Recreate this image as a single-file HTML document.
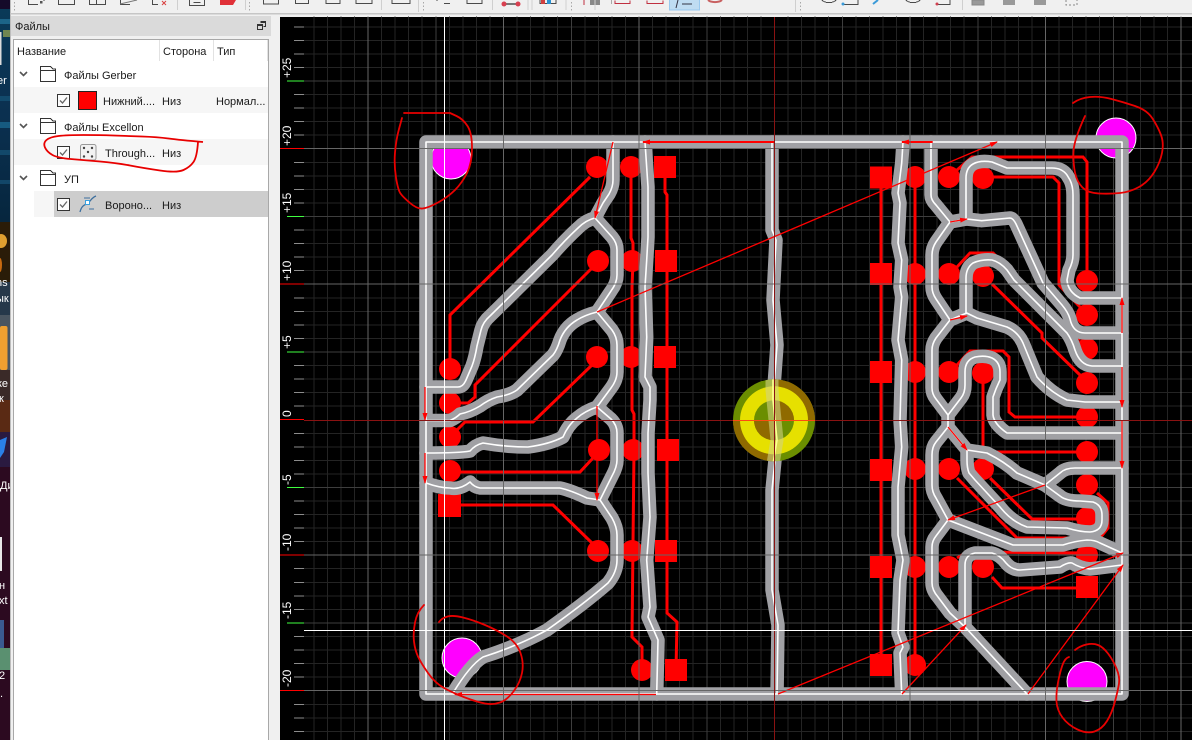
<!DOCTYPE html>
<html lang="ru"><head><meta charset="utf-8"><title>Файлы</title>
<style>
html,body{margin:0;padding:0;background:#f0f0f0;width:1192px;height:740px;overflow:hidden}
svg{display:block}
text{font-family:"Liberation Sans","DejaVu Sans",sans-serif}
.p{font-size:11px;fill:#1a1a1a}
.r{font-size:12px;fill:#fff}
.d{font-size:11px;fill:#fff}
</style></head><body>
<svg width="1192" height="740" viewBox="0 0 1192 740" xmlns="http://www.w3.org/2000/svg">
<defs>
<marker id="a" markerWidth="9" markerHeight="6" refX="7" refY="3" orient="auto" markerUnits="userSpaceOnUse"><path d="M0 0.5L8 3L0 5.5Z" fill="#f00"/></marker>
<clipPath id="cc"><circle cx="774" cy="420.3" r="41"/></clipPath>
<clipPath id="st"><rect x="0" y="0" width="10" height="740"/></clipPath>
<linearGradient id="g1" x1="0" y1="0" x2="0" y2="1"><stop offset="0" stop-color="#0a3a58"/><stop offset=".5" stop-color="#0b3050"/><stop offset="1" stop-color="#06263e"/></linearGradient>
</defs>

<!-- desktop strip -->
<g clip-path="url(#st)">
<rect width="10" height="740" fill="#2c0a20"/>
<rect width="10" height="9" fill="#150a2a"/>
<rect y="9" width="10" height="213" fill="url(#g1)"/>
<rect y="19" width="10" height="5" fill="#1c6488"/>
<rect x="3" y="30" width="7" height="7" fill="#8a9a50" opacity=".8"/>
<rect y="32" width="1.5" height="33" fill="#dcdcdc"/>
<rect y="96" width="10" height="5" fill="#124a6c"/>
<rect y="122" width="10" height="6" fill="#165a80"/>
<rect y="150" width="10" height="5" fill="#12486a"/>
<rect y="180" width="10" height="4" fill="#124668"/>
<rect y="222" width="10" height="60" fill="#2a1c08"/>
<ellipse cx="1" cy="241" rx="6" ry="7" fill="#e0a030"/>
<ellipse cx="0" cy="265" rx="2" ry="7" fill="#c86a10"/>
<rect y="282" width="10" height="40" fill="#26384a"/>
<rect y="315" width="10" height="55" fill="#4a5560"/>
<rect x="0" y="326" width="7.5" height="44" rx="2" fill="#f0a030"/>
<rect y="370" width="10" height="30" fill="#3a2a28"/>
<rect y="400" width="10" height="32" fill="#5a2a14"/>
<rect y="432" width="10" height="35" fill="#2a1a40"/>
<path d="M0 440L7 437L4 452L0 458Z" fill="#2a80e8"/>
<rect x="0" y="537" width="2" height="34" fill="#e8e8e8"/>
<rect x="0" y="620" width="4" height="32" fill="#3a5a90"/>
<rect x="0" y="648" width="10" height="22" fill="#5a9070"/>
<text class="d" x="-3" y="84">er</text>
<text class="d" x="-4" y="286">ns</text>
<text class="d" x="-4" y="302">ык</text>
<text class="d" x="-3" y="387">ке</text>
<text class="d" x="-1" y="402">к</text>
<text class="d" x="0" y="489">Ди</text>
<text class="d" x="-1" y="589">н</text>
<text class="d" x="-1" y="604">xt</text>
<text class="d" x="-1" y="679">2</text>
<text class="d" x="0" y="697">.</text>
</g>
<rect x="10" y="0" width="1" height="740" fill="#bdbdbd"/>

<!-- toolbar partial icons -->
<g fill="none" stroke="#4a4a4a" stroke-width="1" shape-rendering="crispEdges">
<path d="M28.5 0V4.5H38M44 0V1M58.5 0V4.5H74.5V0M89.5 0V4.5H105.5V0M96.5 0V4.5M120.5 0V4.5H130M152.5 0V4.5H158"/>
<path d="M189.5 0V5.5H204.5V0M193.5 2.5H200.5"/>
<path d="M263.5 0V4H278.5V0M295.5 0V3.5H308.5V0M326 0V3.5H340V0M356 0V3.5H372V0M392 0V3.5H410V0"/>
<path d="M437 0V1M444 3.5H450M467 0V3.5H482V0M540 0V3.5H556V0"/>
<path d="M822 0A8 5 0 0 0 836 0M843 4.5H858V0M906 0A8 5 0 0 0 920 0M938 4.5H950V0"/>
</g>
<path d="M120 4L137 0" stroke="#777" fill="none"/>
<path d="M162 1L166 5M166 1L162 5" stroke="#d84040" fill="none"/>
<path d="M220 5H233L236 0H220Z" fill="#e03038"/>
<rect x="40" y="1" width="2.5" height="2.5" fill="#555"/>
<rect x="590" y="0" width="10" height="5" fill="#888"/>
<rect x="611" y="0" width="1" height="4" fill="#aaa"/>
<path d="M615 .5V3.5H630V.5M647 .5V3.5H663V.5" stroke="#c03040" fill="none"/>
<rect x="669.5" y="-1" width="30" height="11" fill="#bfdcf2" stroke="#99c9ef"/>
<path d="M676 8L678 0M682 4H692" stroke="#334" fill="none"/>
<path d="M708 0A8 4 0 0 0 722 0" stroke="#c86060" stroke-width="2" fill="none"/>
<path d="M584 0V5" stroke="#c03040"/>
<rect x="502" y="3" width="16" height="2" fill="#777"/><circle cx="504" cy="4" r="2.5" fill="#d84050"/><circle cx="518" cy="4" r="2.5" fill="#d84050"/>
<rect x="541" y="0" width="4" height="4" fill="#d04040"/><rect x="547" y="0" width="4" height="4" fill="#2a90d0"/>
<circle cx="843" cy="4" r="1.5" fill="#3a9ad8"/><path d="M873 4L878 0" stroke="#3a9ad8" stroke-width="2"/>
<circle cx="937" cy="4" r="1.5" fill="#d04050"/>
<rect x="972" y="0" width="12" height="5" fill="#999" stroke="#888"/><rect x="1003" y="0" width="12" height="5" fill="#999"/><rect x="1034" y="0" width="12" height="5" fill="#999"/>
<path d="M1066 0V5H1077V0" stroke="#888" stroke-dasharray="2 2" fill="none"/>
<path d="M177.5 0V10M245.5 0V10M381.5 0V10M418.5 0V12M492.5 0V10M528 0V10M566 0V10M595 0V10M795.5 0V12M962.5 0V10M532 0V10" stroke="#cfcfcf" fill="none"/>
<path d="M14.5 2V12M249.5 2V12M423.5 2V12M571.5 2V12M800.5 2V12" stroke="#a8a8a8" stroke-dasharray="1.5 2" fill="none"/>
<rect x="10" y="13" width="1182" height="1.5" fill="#c6c6c6"/>

<!-- files panel -->
<rect x="11" y="16" width="260" height="20" fill="#dadada"/>
<text class="p" x="15" y="30">Файлы</text>
<path d="M260.5 21.5H265.500V26.500H263.500M257.500 24.500H262.500V29.500H257.500ZM257.500 25.500H262.500M260.500 22.500H265.500" fill="none" stroke="#333" stroke-width="1" shape-rendering="crispEdges"/>
<rect x="13.5" y="39.5" width="255" height="702" fill="#fff" stroke="#a8a8a8"/>
<path d="M159.5 40V61M213.5 40V61M267.5 40V61" stroke="#e2e2e2"/>
<text class="p" x="17" y="55">Название</text>
<text class="p" x="163" y="55">Сторона</text>
<text class="p" x="217" y="55">Тип</text>
<rect x="14" y="87" width="254" height="26" fill="#f6f6f6"/>
<rect x="14" y="139" width="254" height="26" fill="#f6f6f6"/>
<rect x="34" y="191" width="20" height="26" fill="#f6f6f6"/>
<rect x="54" y="191" width="214" height="26" fill="#cdcdcd"/>

<g fill="none" stroke="#555" stroke-width="1.6"><path d="M20 72L23.500 75.500L27 72M20 124L23.500 127.500L27 124M20 176L23.500 179.500L27 176"/></g>
<g fill="#fff" stroke="#333" stroke-width="1" shape-rendering="crispEdges">
<path d="M40.5 66.5H50.5L53 69H55.5V81.5H40.5ZM40.5 70.5H55.5"/>
<path d="M40.5 118.5H50.5L53 121H55.5V133.5H40.5ZM40.5 122.5H55.5"/>
<path d="M40.5 170.5H50.5L53 173H55.5V185.5H40.5ZM40.5 174.5H55.5"/>
<rect x="57.5" y="94.5" width="12" height="12" fill="#fcfcfc"/>
<rect x="57.5" y="146.5" width="12" height="12" fill="#fcfcfc"/>
<rect x="57.5" y="198.5" width="12" height="12" fill="#fcfcfc"/>
</g>
<g fill="none" stroke="#666" stroke-width="1.3"><path d="M60 100.5L62.5 103L67 97.5M60 152.5L62.5 155L67 149.5M60 204.5L62.5 207L67 201.5"/></g>
<rect x="78.5" y="91.5" width="18" height="18" fill="#f00" stroke="#222"/>
<rect x="80.5" y="144.5" width="15.5" height="15.5" rx="2" fill="#f2f2f2" stroke="#999"/>
<g fill="#444"><circle cx="84" cy="148" r="1.2"/><circle cx="92" cy="148" r="1.2"/><circle cx="88" cy="152" r="1.2"/><circle cx="84" cy="156.5" r="1.2"/><circle cx="92" cy="156.5" r="1.2"/></g>
<path d="M80 212C82 204 86 205 88 203C91 201 91 198 96 196" fill="none" stroke="#3d6f9e" stroke-width="1.3"/>
<path d="M84 198H90M89 209H94" stroke="#3d6f9e" fill="none"/>
<rect x="85.5" y="200.5" width="4" height="4" fill="#fff" stroke="#38a0e0"/>

<text class="p" x="64" y="79">Файлы Gerber</text>
<text class="p" x="103" y="105">Нижний....</text>
<text class="p" x="162" y="105">Низ</text>
<text class="p" x="216" y="105">Нормал...</text>
<text class="p" x="64" y="131">Файлы Excellon</text>
<text class="p" x="105" y="157">Through...</text>
<text class="p" x="162" y="157">Низ</text>
<text class="p" x="64" y="183">УП</text>
<text class="p" x="105" y="209">Вороно...</text>
<text class="p" x="162" y="209">Низ</text>
<path d="M203 142Q180 140 168.5 138.5T142 136.5T113.5 135.5T83.5 135T58.5 136T46.5 140T45 147.5T52.5 155T70.5 159T100 161.5T130 165.5T160 170.5T183.5 170T193.5 162T198 142" fill="none" stroke="#e80000" stroke-width="1.8" stroke-linejoin="round"/>

<!-- canvas -->
<rect x="280" y="17" width="912" height="723" fill="#000"/>
<g transform="translate(0 -.6)" shape-rendering="crispEdges" fill="none">
<path stroke="#242424" d="M313.8 17V741M327.35 17V741M340.9 17V741M354.45 17V741M381.55 17V741M395.1 17V741M408.65 17V741M422.2 17V741M449.3 17V741M462.85 17V741M476.4 17V741M489.95 17V741M517.05 17V741M530.6 17V741M544.15 17V741M557.7 17V741M584.8 17V741M598.35 17V741M611.9 17V741M625.45 17V741M652.55 17V741M666.1 17V741M679.65 17V741M693.2 17V741M720.3 17V741M733.85 17V741M747.4 17V741M761 17V741M788.05 17V741M801.6 17V741M815.15 17V741M828.7 17V741M855.8 17V741M869.35 17V741M882.9 17V741M896.45 17V741M923.55 17V741M937.1 17V741M950.65 17V741M964.2 17V741M991.3 17V741M1004.85 17V741M1018.4 17V741M1031.95 17V741M1059.05 17V741M1072.6 17V741M1086.15 17V741M1099.7 17V741M1126.8 17V741M1140.35 17V741M1153.9 17V741M1167.45 17V741
M304 27.35H1192M304 40.9H1192M304 54.45H1192M304 68H1192M304 95.1H1192M304 108.65H1192M304 122.2H1192M304 135.75H1192M304 162.85H1192M304 176.4H1192M304 189.95H1192M304 203.5H1192M304 230.6H1192M304 244.15H1192M304 257.7H1192M304 271.25H1192M304 298.35H1192M304 311.9H1192M304 325.45H1192M304 339H1192M304 366.1H1192M304 379.65H1192M304 393.2H1192M304 406.75H1192M304 433.85H1192M304 447.4H1192M304 460.95H1192M304 474.5H1192M304 501.6H1192M304 515.15H1192M304 528.7H1192M304 542.25H1192M304 569.35H1192M304 582.9H1192M304 596.45H1192M304 610H1192M304 637.1H1192M304 650.65H1192M304 664.2H1192M304 677.75H1192M304 704.85H1192M304 718.4H1192M304 731.95H1192"/>
<path stroke="#3e3e3e" d="M435.75 17V741M571.25 17V741M706.75 17V741M842.25 17V741M977.75 17V741M1113.25 17V741M304 81.55H1192M304 217.05H1192M304 352.55H1192M304 488.05H1192M304 623.55H1192"/>
<path stroke="#8c8c8c" d="M294 27.35h10M294 40.9h10M294 54.45h10M294 68h10M294 95.1h10M294 108.65h10M294 122.2h10M294 135.75h10M294 162.85h10M294 176.4h10M294 189.95h10M294 203.5h10M294 230.6h10M294 244.15h10M294 257.7h10M294 271.25h10M294 298.35h10M294 311.9h10M294 325.45h10M294 339h10M294 366.1h10M294 379.65h10M294 393.2h10M294 406.75h10M294 433.85h10M294 447.4h10M294 460.95h10M294 474.5h10M294 501.6h10M294 515.15h10M294 528.7h10M294 542.25h10M294 569.35h10M294 582.9h10M294 596.45h10M294 610h10M294 637.1h10M294 650.65h10M294 664.2h10M294 677.75h10M294 704.85h10M294 718.4h10M294 731.95h10"/>
<path stroke="#40ff40" d="M287 81.55h17M287 217.05h17M287 352.55h17M287 488.05h17M287 623.55h17"/>
<path stroke="#ff0000" d="M280 149.3h24M280 284.8h24M280 420.3h24M280 555.8h24M280 691.3h24"/>
</g>
<g>
<text class="r" transform="translate(291,78) rotate(-90)">+25</text>
<text class="r" transform="translate(291,146) rotate(-90)">+20</text>
<text class="r" transform="translate(291,213) rotate(-90)">+15</text>
<text class="r" transform="translate(291,281) rotate(-90)">+10</text>
<text class="r" transform="translate(291,349) rotate(-90)">+5</text>
<text class="r" transform="translate(291,417) rotate(-90)">0</text>
<text class="r" transform="translate(291,485) rotate(-90)">-5</text>
<text class="r" transform="translate(291,551) rotate(-90)">-10</text>
<text class="r" transform="translate(291,619) rotate(-90)">-15</text>
<text class="r" transform="translate(291,687) rotate(-90)">-20</text>
</g>

<!-- magenta holes -->
<g fill="#ff00ff" stroke="#fff" stroke-width="1">
<circle cx="451" cy="159" r="20"/><circle cx="1116" cy="138" r="20"/><circle cx="462" cy="658" r="20"/><circle cx="1087" cy="681.5" r="20"/>
</g>

<!-- copper -->
<g fill="none" stroke="#f00" stroke-width="3" stroke-linejoin="miter">
<path d="M590 177L450 315V369"/>
<path d="M592 268L475 385V397L468 403H450"/>
<path d="M592 365L533 422H465L450 437"/>
<path d="M593 458L580 472H450"/>
<path d="M592 543L553 505H450"/>
<path d="M631 167V238L633 243V261L632 287V410L634 414V450L632 637L642 647V670"/>
<path d="M665 167V192L667 195V613L677 622L676 670"/>
<path d="M881 177V665M915 177V665"/>
<path d="M957 170L972 157H1083L1087 162V281"/>
<path d="M983 177H1053L1059 183V285L1080 307"/>
<path d="M957 267L970 253H993L1080 340"/>
<path d="M992 284L1042 333V338L1080 375"/>
<path d="M957 365L970 351H1003L1009 357V412L1015 417H1087"/>
<path d="M983 373V448L993 452H1087"/>
<path d="M957 478L1017 538H1100L1108 528V503L1097 493"/>
<path d="M990 478L1032 519H1087"/>
<path d="M957 558L967 552L1087 553"/>
<path d="M992 577L1002 588H1087"/>
</g>
<g fill="#f00">
<circle cx="597" cy="167" r="11"/><circle cx="598" cy="261" r="11"/><circle cx="597" cy="357" r="11"/><circle cx="599" cy="450" r="11"/><circle cx="598" cy="551" r="11"/>
<circle cx="631" cy="167" r="11"/><circle cx="632" cy="261" r="11"/><circle cx="631" cy="357" r="11"/><circle cx="633" cy="450" r="11"/><circle cx="632" cy="551" r="11"/><circle cx="642" cy="670" r="11"/>
<rect x="654" y="156" width="22" height="22"/><rect x="655" y="250" width="22" height="22"/><rect x="654" y="346" width="22" height="22"/><rect x="657" y="439" width="22" height="22"/><rect x="655" y="540" width="22" height="22"/><rect x="665" y="659" width="22" height="22"/>
<circle cx="450" cy="369" r="11"/><circle cx="450" cy="403" r="11"/><circle cx="450" cy="437" r="11"/><circle cx="450" cy="471" r="11"/><rect x="438" y="494" width="23" height="23"/>
<rect x="870" y="166.5" width="22" height="22"/><rect x="870" y="263" width="22" height="22"/><rect x="870" y="361" width="22" height="22"/><rect x="870" y="459" width="22" height="22"/><rect x="870" y="556" width="22" height="22"/><rect x="870" y="654" width="22" height="22"/>
<circle cx="915" cy="177" r="11"/><circle cx="915" cy="274" r="11"/><circle cx="915" cy="372" r="11"/><circle cx="915" cy="469" r="11"/><circle cx="915" cy="567" r="11"/><circle cx="915" cy="665" r="11"/>
<circle cx="949" cy="177" r="11"/><circle cx="949" cy="274" r="11"/><circle cx="949" cy="372" r="11"/><circle cx="949" cy="469" r="11"/><circle cx="949" cy="567" r="11"/>
<circle cx="983" cy="178" r="11"/><circle cx="983" cy="276" r="11"/><circle cx="983" cy="373" r="11"/><circle cx="983" cy="469" r="11"/><circle cx="983" cy="567" r="11"/>
<circle cx="1087" cy="281" r="11"/><circle cx="1087" cy="315" r="11"/><circle cx="1087" cy="349" r="11"/><circle cx="1087" cy="383" r="11"/><circle cx="1087" cy="417" r="11"/><circle cx="1087" cy="452" r="11"/><circle cx="1087" cy="485" r="11"/><circle cx="1087" cy="518" r="11"/><circle cx="1087" cy="555" r="11"/>
<rect x="1076" y="576" width="22" height="22"/>
</g>

<!-- tool paths -->
<defs><g id="t" fill="none" stroke-linejoin="round" stroke-linecap="round">
<path d="M426 142H1122V694H426Z"/>
<path d="M426 387H458Q463 387 466 380L472 366Q475 358 477 346L481 330Q483 322 490 316L552 255Q565 240 578 228Q586 220 595 218L612 237Q617 243 617 250V275Q617 283 611 291L597 312L612 330Q617 337 617 345V372Q617 380 611 388L597 407L611 419Q617 425 617 433V460Q617 467 612 476L600 500L612 518Q617 527 617 535V560Q617 572 608 583Q585 603 547 630Q520 645 483 657Q470 665 453 693"/>
<path d="M595 218L603 203L609 194Q613 187 613 180V142"/>
<path d="M597 312Q585 315 577 320Q565 327 560 340Q557 350 553 355L517 390Q510 395 497 397Q488 400 480 406Q470 412 460 414Q456 418 450 420.5H426"/>
<path d="M597 407Q585 411 577 418Q568 425 563 437Q550 444 528 447Q505 447 483 443Q475 445 470 451Q460 453 426 453"/>
<path d="M600 500L587 498Q570 490 560 488H480Q474 487 470 482Q460 490 450 488Q440 488 426 483"/>
<path d="M645 142L648 187V237L646.7 260L645 287L646.7 337L645 377L650 387V400L648 433V473L650 517L646.7 560L650 607L648 617L658 640L656.7 694"/>
<path d="M772 142V230L776 240L773 300L777 345L773 400L777 440L772 490V590L778 625L777 694"/>
<path d="M903 142L901.7 163L898 193L900 203L898 243L901.7 260L900 287L901.7 297L898 340L901.7 360L900 420L901.7 447L898 487V535L903 560L900 580L898 633L903 647L900 653L901.7 694"/>
<path d="M931 142V195Q931 200 936 205L950 222L936 242Q932 248 932 255V287Q932 293 936 299L950 320L936 338Q932 344 932 350V388Q932 394 936 399L948 415V427L936 442Q932 447 932 455V485Q932 492 936 498L948 520L936 536Q932 541 932 547V583Q932 590 938 597L950 613L965 627L1027 694"/>
<path d="M950 222L966.7 219L981.7 220.7L1010 218Q1013 218 1016 224L1043 283L1062 305Q1068 312 1070 319Q1073 333 1085 333H1122"/>
<path d="M966 219V178Q966 168 973 164Q980 160 992 162L1007 168H1052Q1062 168 1067 175L1070 180Q1073 186 1073 195V255Q1073 262 1069 270L1067 280Q1068 292 1080 298H1122"/>
<path d="M950 320L966.7 313L977 318L1007 327Q1018 332 1023 343L1037 377Q1050 392 1067 400L1085 402H1122"/>
<path d="M966 313V278Q966 268 973 263Q982 259 992 260Q1000 262 1007 270L1014 280L1067 333Q1072 340 1075 350Q1080 365 1092 366H1122"/>
<path d="M948 415L961 398Q965 393 965 385V372Q965 360 975 357Q985 355 992 358Q1000 362 1000 372V380Q996 388 993 397V415Q994 424 1007 433H1122"/>
<path d="M948 427L967 450L987 453Q1005 462 1017 473L1045 485L1060 473Q1065 468 1075 468H1122"/>
<path d="M1045 485L1060 496Q1066 501 1080 501L1093 502Q1102 505 1102 515V520Q1102 531 1090 532Q1080 532 1067 528L1027 527Q1012 522 1000 507L975 480L969 473Q967 468 967 460V450"/>
<path d="M948 520L1013 545H1063Q1075 541 1087 540Q1095 540 1100 543L1122 553"/>
<path d="M965 625V565Q965 555 975 553H992Q1000 555 1006 563Q1012 570 1020 570L1060 567Q1068 562 1072 563Q1080 568 1090 569L1122 565"/>
</g></defs>
<use href="#t" stroke="#a0a0a4" stroke-width="13.5"/>
<use href="#t" stroke="#fff" stroke-width="1.6"/>

<!-- target -->
<circle cx="774" cy="420.3" r="41" fill="#6b8e00"/>
<path d="M774 420.3V379.3A41 41 0 0 1 815 420.3ZM774 420.3V461.3A41 41 0 0 1 733 420.3Z" fill="#8f6a00"/>
<circle cx="774" cy="420.3" r="34" fill="#e6e000"/>
<circle cx="774" cy="420.3" r="20" fill="#6b8e00"/>
<path d="M774 420.3V400.3A20 20 0 0 1 794 420.3ZM774 420.3V440.3A20 20 0 0 1 754 420.3Z" fill="#8f6a00"/>
<g clip-path="url(#cc)" fill="none">
<path d="M772 370V390L773 400L777 440L772 470" stroke="#d2d282" stroke-width="13" opacity=".6"/>
<path d="M773 375V400L777 440L772 470" stroke="#ffff90" stroke-width="1.6"/>
</g>

<!-- rapid moves -->
<g fill="none" stroke="#f00" stroke-width="1.3" marker-end="url(#a)">
<path d="M613 142L595 218"/>
<path d="M775 142H643" stroke-width="2"/>
<path d="M597 312L997 142"/>
<path d="M932.7 142H902" stroke-width="2"/>
<path d="M597 406V500"/>
<path d="M425 387V420"/>
<path d="M425 453V483"/>
<path d="M656 694.5H455"/>
<path d="M1122 333V298"/>
<path d="M1122 367V407"/>
<path d="M1122 420V468"/>
<path d="M950 222L967 219"/>
<path d="M950 320L967 316"/>
<path d="M948 427L967 450"/>
<path d="M1045 485L948 520"/>
<path d="M778 694L1123 553"/>
<path d="M902 694L966 625"/>
<path d="M1028 694L1123 565"/>
</g>

<!-- overlay lines -->
<g transform="translate(0 -.6)" shape-rendering="crispEdges" fill="none">
<path stroke="#666" d="M368 17V741M503.5 17V741M639 17V741M910 17V741M1045.5 17V741M1181 17V741M304 149.3H1192M304 284.8H1192M304 555.8H1192M304 691.3H1192"/>
</g>
<g shape-rendering="crispEdges" fill="none">
<path stroke="#8a1212" d="M774.5 17V740M304 420.5H1192"/>
<path stroke="#ff4a10" d="M733 420.5H815"/>
<path stroke="#fff" d="M444.5 17V740M304 630.5H1192"/>
</g>

<!-- hand marks -->
<g fill="none" stroke="#e80000" stroke-width="1.8" stroke-linejoin="round" stroke-linecap="round">
<path d="M404 113H450Q450 113 456.5 116T467.5 126T472 148T467 173T455 190T438 202.5T422.5 208.5T410 203T400.5 193.5T396 177.5T395 152.5T399 129L402 118"/>
<path d="M1073 103Q1080 98 1090 97T1111.5 99T1135 106T1152.5 118.5T1161 135T1162 153T1154 172.5T1139 187T1120 193T1099 193.5T1082.5 187.5T1075 172.5T1073.5 151.5T1085 116"/>
<path d="M424 605Q417 612 415 622.5T414 641.5T418 656.5T428 673T444 688T465 697.5T485 703.5T500 702.5T513.5 691.5T522 673T520.5 653T507 636.5T485 625T463 617.5T447.5 616.5T439 622"/>
<path d="M1069 657Q1065 658 1062.5 665T1058 682.5T1056.5 701.5T1062.5 717.5T1077.5 729.5T1094.5 731.5T1107 721T1115 701.5T1119 683.5T1116.5 668.5T1108 653.5T1098 645T1086.5 644.5T1075 650"/>
</g>
</svg>
</body></html>
